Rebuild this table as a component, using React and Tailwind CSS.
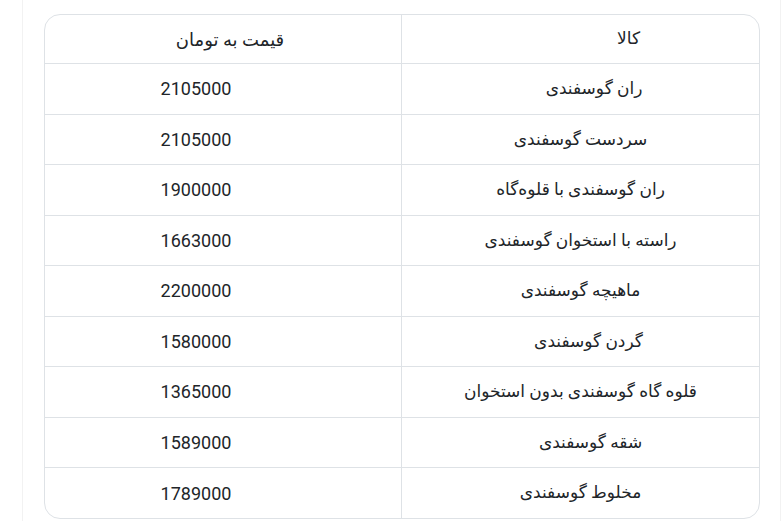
const rows = [
  { name: "ران گوسفندی", price: "2105000", pad: "pl-[27px]" },
  { name: "سردست گوسفندی", price: "2105000", pad: "" },
  { name: "ران گوسفندی با قلوه‌گاه", price: "1900000", pad: "" },
  { name: "راسته با استخوان گوسفندی", price: "1663000", pad: "" },
  { name: "ماهیچه گوسفندی", price: "2200000", pad: "" },
  { name: "گردن گوسفندی", price: "1580000", pad: "pl-[16px]" },
  { name: "قلوه گاه گوسفندی بدون استخوان", price: "1365000", pad: "" },
  { name: "شقه گوسفندی", price: "1589000", pad: "pl-[20px]" },
  { name: "مخلوط گوسفندی", price: "1789000", pad: "" },
];

export default function App() {
  return (
    <div
      className="min-h-screen bg-white text-[18px] text-[#212529]"
      style={{ fontFamily: "Roboto, 'DejaVu Sans', sans-serif" }}
    >
      <div className="ml-[22px] w-[759px] min-h-[521px] border-x border-[#f2f2f2] pt-[14px] pl-[21px] pr-[19px]">
        <div
          dir="rtl"
          className="w-[716px] overflow-hidden rounded-2xl border border-[#dee2e6]"
        >
          {/* Header */}
          <div className="grid h-[49px] grid-cols-2 border-b border-[#dee2e6]">
            <div className="flex items-center justify-center pl-[96px] text-[17px]">کالا</div>
            <div className="flex items-center justify-center border-r border-[#dee2e6] pl-[14px]">
              قیمت به تومان
            </div>
          </div>

          {/* Rows */}
          {rows.map((row, i) => (
            <div
              key={i}
              className={
                i === rows.length - 1
                  ? "grid h-[50px] grid-cols-2"
                  : "grid h-[50.5px] grid-cols-2 border-b border-[#dee2e6]"
              }
            >
              <div className={`flex items-center justify-center text-[17px] ${row.pad}`}>
                {row.name}
              </div>
              <div className="flex items-center justify-center border-r border-[#dee2e6] pr-[54px]">
                {row.price}
              </div>
            </div>
          ))}
        </div>
      </div>
    </div>
  );
}
